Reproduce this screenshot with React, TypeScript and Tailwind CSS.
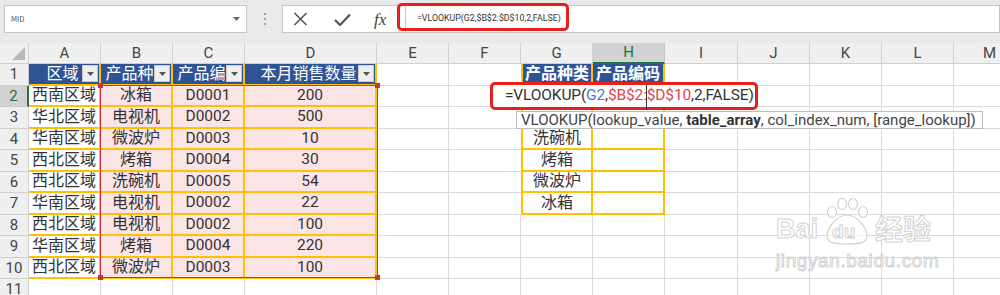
import React from 'react';

const LATIN = "font-['Roboto','Noto_Sans_CJK_SC',sans-serif]";

const LETTERS = ['A', 'B', 'C', 'D', 'E', 'F', 'G', 'H', 'I', 'J', 'K', 'L', 'M'];

const regions = ['西南区域', '华北区域', '华南区域', '西北区域', '西北区域', '华南区域', '西北区域', '华南区域', '西北区域'];
const products = ['冰箱', '电视机', '微波炉', '烤箱', '洗碗机', '电视机', '电视机', '烤箱', '微波炉'];
const codes = ['D0001', 'D0002', 'D0003', 'D0004', 'D0005', 'D0002', 'D0002', 'D0004', 'D0003'];
const amounts = ['200', '500', '10', '30', '54', '22', '100', '220', '100'];
// G2 / G3 sit under the edit box and the tooltip
const lookupKinds = ['', '', '洗碗机', '烤箱', '微波炉', '冰箱'];

const plain = 'border-r border-b border-[#dadada] bg-white';
const orange = 'border-r-2 border-b-2 border-[#ffc000]';

const Dropdown = () => (
  <div className="w-[16px] h-[17px] bg-[#efefef] border border-[#c9c9c9] flex items-center justify-center shrink-0">
    <svg width="7" height="4" viewBox="0 0 7 4">
      <path d="M0 0h7L3.5 4z" fill="#555" />
    </svg>
  </div>
);

const HeadCell = ({ label, wide }: { label: string; wide?: boolean }) => (
  <div className={`bg-[#2f5496] ${orange} flex items-center pr-[1px] text-white text-[16px]`}>
    <span className={`flex-1 text-center ${wide ? 'pl-[14px]' : 'pl-[4px]'}`}>{label}</span>
    <Dropdown />
  </div>
);

const RowHeader = ({ n, active }: { n: number; active?: boolean }) => (
  <div
    className={
      active
        ? 'bg-[#d2d2d2] border-r-2 border-r-[#217346] border-b border-b-[#c8c8c8] text-[#217346] flex items-center justify-center text-[15px]'
        : 'bg-[#efefef] border-r border-b border-[#cfcfcf] text-[#444] flex items-center justify-center text-[15px]'
    }
  >
    {n}
  </div>
);

const TopBar = () => (
  <div className="h-[43px] bg-[#e9e9e9] relative flex items-start pt-[5px] pl-[4px]">
    {/* name box */}
    <div className="w-[243px] h-[28px] bg-white border border-[#c6c6c6] flex items-center pl-[6px] pr-[6px]">
      <span className="flex-1 text-[7.5px] text-[#555]">MID</span>
      <svg width="7" height="4" viewBox="0 0 7 4">
        <path d="M0 0h7L3.5 4z" fill="#666" />
      </svg>
    </div>
    <div className="w-[35px] h-[28px] flex flex-col items-center justify-center gap-[3px]">
      <div className="w-[2px] h-[2px] bg-[#a0a0a0]" />
      <div className="w-[2px] h-[2px] bg-[#a0a0a0]" />
      <div className="w-[2px] h-[2px] bg-[#a0a0a0]" />
    </div>
    {/* fx buttons */}
    <div className="w-[123px] h-[28px] bg-white border border-[#c6c6c6] border-r-0 flex items-center">
      <div className="w-[10px]" />
      <svg width="15" height="14" viewBox="0 0 15 14">
        <path d="M1.5 1l12 12M13.5 1l-12 12" stroke="#555" strokeWidth="1.6" fill="none" />
      </svg>
      <div className="w-[26px]" />
      <svg width="17" height="13" viewBox="0 0 17 13">
        <path d="M1 7l5 5L16 1.5" stroke="#555" strokeWidth="2.2" fill="none" />
      </svg>
      <div className="w-[23px]" />
      <span className="font-['Liberation_Serif',serif] italic text-[17px] text-[#444] leading-none">fx</span>
    </div>
    {/* formula text */}
    <div className="flex-1 h-[28px] bg-white border border-[#c6c6c6] flex items-center pl-[11px]">
      <span className={`${LATIN} text-[8.8px] text-[#333]`}>=VLOOKUP(G2,$B$2:$D$10,2,FALSE)</span>
    </div>
    <div className="absolute left-[397px] top-[3px] w-[172px] h-[28px] border-[3px] border-[#e8201c] rounded-[5px]" />
  </div>
);

const Sheet = () => (
  <div
    className={`grid grid-cols-[29px_72px_72px_72px_132px_72px_72px_72px_72px_73px_72px_72px_72px_72px] grid-rows-[21px_repeat(11,21.5px)] ${LATIN} text-[#333]`}
  >
    {/* column header row */}
    <div className="bg-[#efefef] border-r border-b border-[#cfcfcf] flex items-end justify-end p-[3px]">
      <svg width="13" height="13" viewBox="0 0 13 13">
        <path d="M13 0V13H0z" fill="#b9b9b9" />
      </svg>
    </div>
    {LETTERS.map(l =>
      l === 'H' ? (
        <div key={l} className="bg-[#d2d2d2] border-r border-r-[#c8c8c8] border-b-2 border-b-[#217346] text-[#217346] flex items-center justify-center text-[15px]">
          {l}
        </div>
      ) : (
        <div key={l} className="bg-[#efefef] border-r border-b border-[#cfcfcf] text-[#444] flex items-center justify-center text-[15px]">
          {l}
        </div>
      )
    )}

    {/* row 1 */}
    <RowHeader n={1} />
    <HeadCell label="区域" wide />
    <HeadCell label="产品种" />
    <HeadCell label="产品编" />
    <HeadCell label="本月销售数量" wide />
    <div className={plain} />
    <div className="border-b border-[#dadada] bg-white" />
    <div className={`bg-[#2f5496] ${orange} border-l-2 text-white text-[16px] font-bold flex items-center justify-center`}>产品种类</div>
    <div className={`bg-[#2f5496] ${orange} text-white text-[16px] font-bold flex items-center justify-center`}>产品编码</div>
    <div className={plain} />
    <div className={plain} />
    <div className={plain} />
    <div className={plain} />
    <div className={plain} />

    {/* rows 2-11 */}
    {Array.from({ length: 10 }, (_, i) => {
      const n = i + 2;
      const inTable = i < 9;
      const kind = i < 6 ? lookupKinds[i] : null;
      return (
        <React.Fragment key={n}>
          <RowHeader n={n} active={n === 2} />
          {inTable ? (
            <>
              <div className={`bg-white ${orange} flex items-center justify-center text-[16px]`}>{regions[i]}</div>
              <div className={`bg-[#fbe4e6] ${orange} flex items-center justify-center text-[16px]`}>{products[i]}</div>
              <div className={`bg-[#fbe4e6] ${orange} flex items-center justify-center text-[15.5px]`}>{codes[i]}</div>
              <div className={`bg-[#fbe4e6] ${orange} flex items-center justify-center text-[15.5px]`}>{amounts[i]}</div>
            </>
          ) : (
            <>
              <div className={plain} />
              <div className={plain} />
              <div className={plain} />
              <div className={plain} />
            </>
          )}
          <div className={plain} />
          {kind !== null ? (
            <>
              <div className="border-b border-[#dadada] bg-white" />
              <div className={`bg-white ${orange} border-l-2 flex items-center justify-center text-[16px]`}>{kind}</div>
              <div className={`bg-white ${orange}`} />
            </>
          ) : (
            <>
              <div className={plain} />
              <div className={plain} />
              <div className={plain} />
            </>
          )}
          <div className={plain} />
          <div className={plain} />
          <div className={plain} />
          <div className={plain} />
          <div className={plain} />
        </React.Fragment>
      );
    })}
  </div>
);

const Watermark = () => (
  <div className="absolute left-[776px] top-[198px] w-[200px] h-[75px] pointer-events-none text-white/70 [-webkit-text-stroke:1px_#d2d2d2]">
    <div className="flex items-end">
      <span className="font-['Liberation_Sans',sans-serif] font-bold text-[27px] leading-none mb-[2px]">Bai</span>
      <div className="relative w-[50px] h-[47px] ml-[4px]">
        <svg className="absolute left-0 top-0" width="50" height="47" viewBox="0 0 50 47">
          <g fill="#ffffff" fillOpacity="0.7" stroke="#d2d2d2" strokeWidth="1.2">
            <ellipse cx="10" cy="14" rx="4.5" ry="5.5" />
            <ellipse cx="20" cy="6" rx="4.5" ry="5.5" />
            <ellipse cx="31" cy="6" rx="4.5" ry="5.5" />
            <ellipse cx="41" cy="14" rx="4.5" ry="5.5" />
            <path d="M25 17c-10 0-20 13-20 21 0 7 7 8 20 8s20-1 20-8c0-8-10-21-20-21z" />
          </g>
        </svg>
        <span className="absolute left-[10px] top-[24px] font-['Liberation_Sans',sans-serif] font-bold text-[19px] leading-none">du</span>
      </div>
      <span className="font-['Noto_Sans_CJK_SC',sans-serif] font-bold text-[28px] leading-none ml-[3px] mb-[3px]">经验</span>
    </div>
    <div className="font-['Liberation_Sans',sans-serif] text-[19px] leading-none mt-[6px] tracking-[0.6px]">jingyan.baidu.com</div>
  </div>
);

export default function App() {
  return (
    <div className="w-[1000px] h-[295px] overflow-hidden bg-white relative font-['Noto_Sans_CJK_SC',sans-serif]">
      <TopBar />
      <Sheet />

      {/* referenced range B2:D10 */}
      <div className="absolute left-[100px] top-[85px] w-[278px] h-[193px] border-[1.5px] border-[#c9323a] pointer-events-none">
        <div className="absolute -left-[3px] -top-[3px] w-[5px] h-[5px] bg-[#c9323a]" />
        <div className="absolute -right-[3px] -top-[3px] w-[5px] h-[5px] bg-[#c9323a]" />
        <div className="absolute -left-[3px] -bottom-[3px] w-[5px] h-[5px] bg-[#c9323a]" />
        <div className="absolute -right-[3px] -bottom-[3px] w-[5px] h-[5px] bg-[#c9323a]" />
      </div>

      {/* in-cell editing */}
      <div className="absolute left-[490px] top-[82px] w-[268px] h-[28px] bg-white border-[3px] border-[#e8201c] rounded-[5px] flex items-center pl-[12px]">
        <span className={`${LATIN} text-[15.5px] text-[#333] tracking-[-0.15px] leading-none`}>
          =VLOOKUP(<span className="text-[#3b7fd6]">G2</span>,<span className="text-[#e0434d]">$B$2:$D$10</span>,2,FALSE)
        </span>
        <div className="absolute left-[153px] top-[0px] w-[1px] h-[25px] bg-[#333]" />
      </div>

      {/* function tooltip */}
      <div className="absolute left-[516px] top-[111px] w-[467px] h-[18px] bg-white border border-[#bdbdbd] flex items-center pl-[4px]">
        <span className={`${LATIN} text-[15px] text-[#444] leading-none`}>
          VLOOKUP(lookup_value, <b className="text-[#333]">table_array</b>, col_index_num, [range_lookup])
        </span>
      </div>

      <Watermark />
    </div>
  );
}
